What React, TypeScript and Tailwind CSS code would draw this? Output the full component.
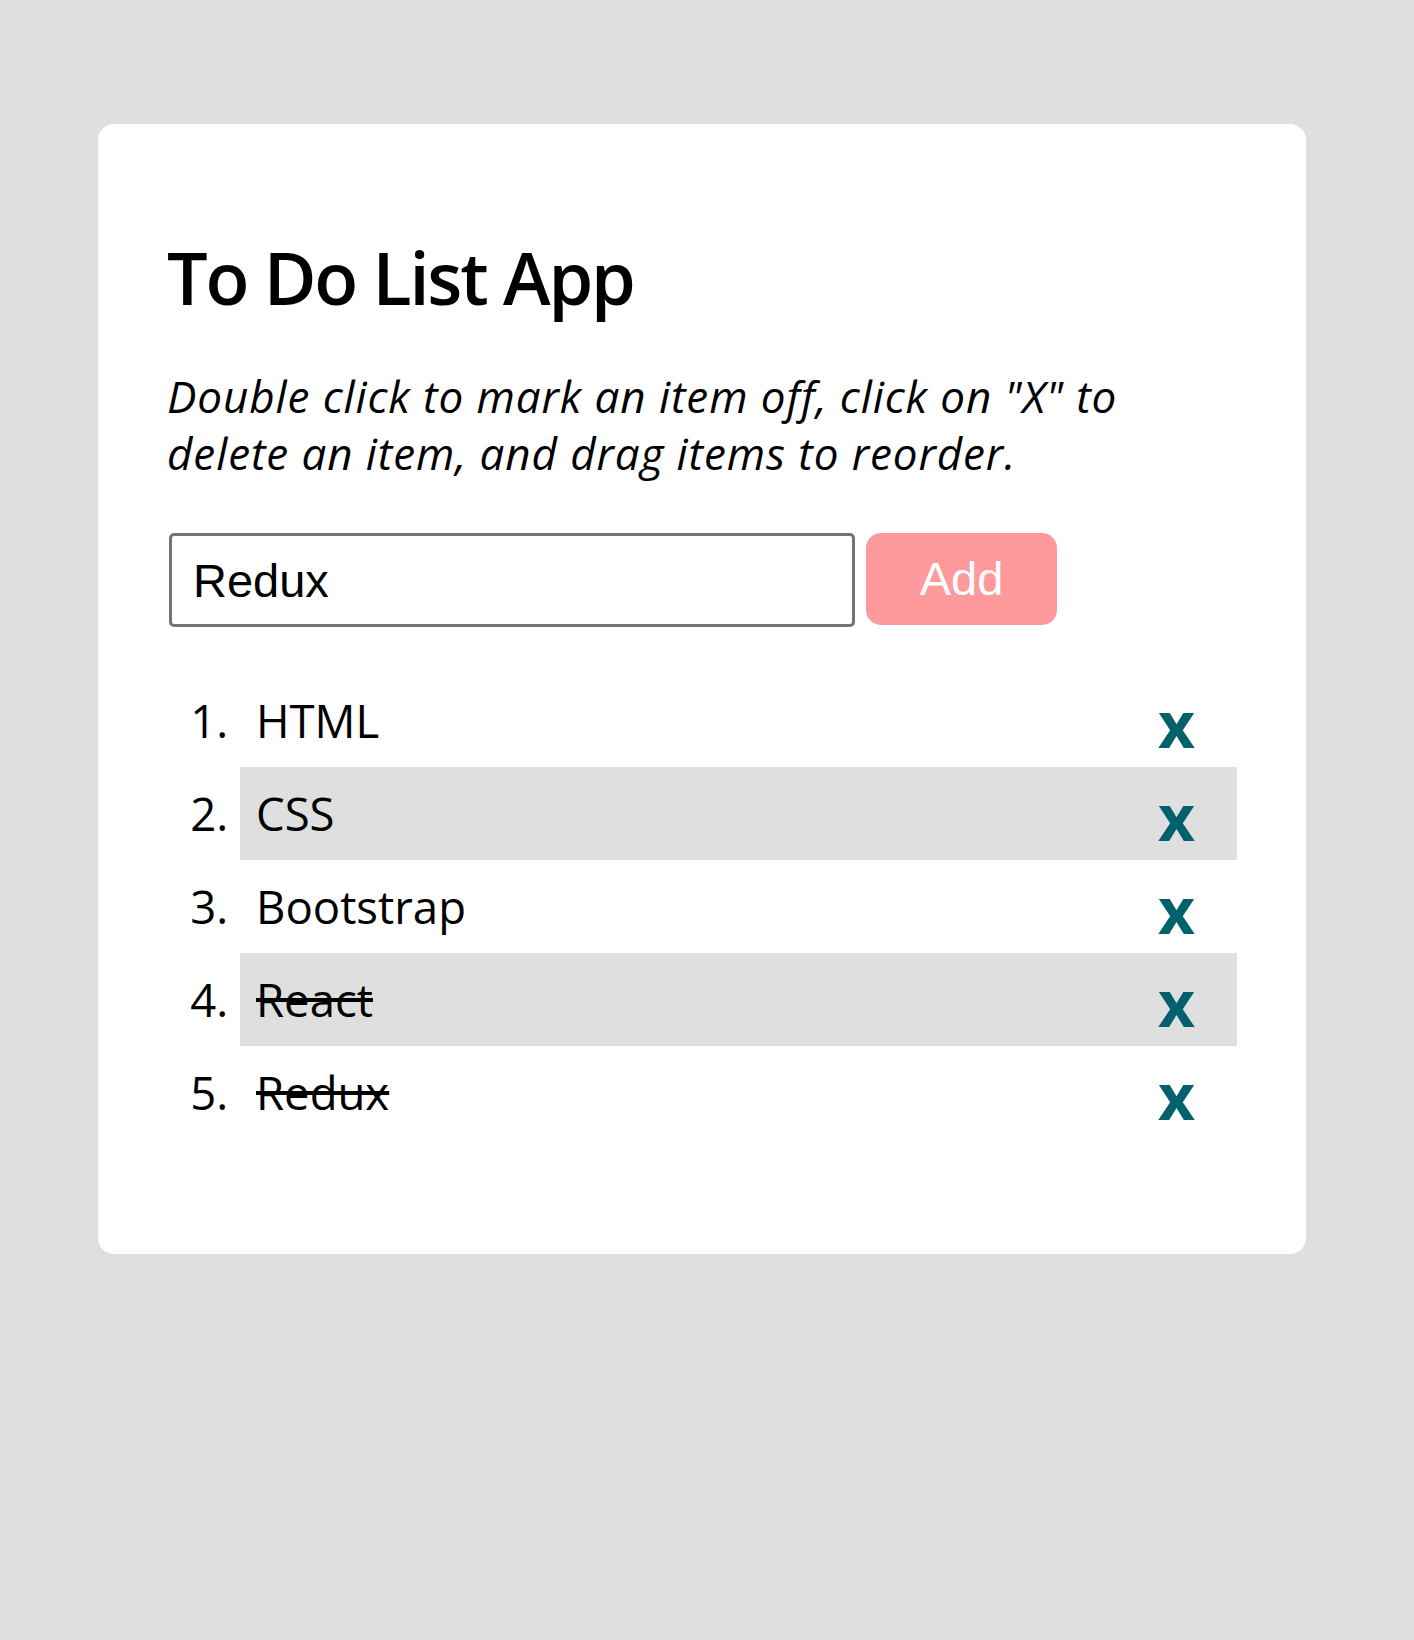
import { useState } from 'react';

type Todo = { id: number; text: string; done: boolean };

const initialTodos: Todo[] = [
  { id: 1, text: 'HTML', done: false },
  { id: 2, text: 'CSS', done: false },
  { id: 3, text: 'Bootstrap', done: false },
  { id: 4, text: 'React', done: true },
  { id: 5, text: 'Redux', done: true },
];

export default function App() {
  const [todos, setTodos] = useState<Todo[]>(initialTodos);
  const [value, setValue] = useState('Redux');

  const toggle = (id: number) =>
    setTodos((list) => list.map((t) => (t.id === id ? { ...t, done: !t.done } : t)));

  const remove = (id: number) => setTodos((list) => list.filter((t) => t.id !== id));

  const add = () => {
    if (!value.trim()) return;
    setTodos((list) => [...list, { id: Date.now(), text: value.trim(), done: false }]);
  };

  return (
    <div className="min-h-[1640px] bg-[#dfdfdf] pt-[124px] font-['Open_Sans',sans-serif] text-black">
      <div className="ml-[98px] w-[1208px] h-[1130px] rounded-[16px] bg-white px-[69px] pt-[104px]">
        {/* Header */}
        <h1 className="text-[72px] font-semibold leading-[98px] tracking-[-2.2px]">To Do List App</h1>
        <p className="mt-[42px] text-[44px] italic leading-[56.5px] tracking-[0.9px]">
          Double click to mark an item off, click on "X" to delete an item, and drag items to reorder.
        </p>

        {/* Input row */}
        <div className="mt-[52px] ml-[2px] flex items-start">
          <input
            value={value}
            onChange={(e) => setValue(e.target.value)}
            className="h-[94px] w-[686px] rounded-[5px] border-[3px] border-[#737373] bg-white px-[21px] font-['Liberation_Sans',Arial,sans-serif] text-[47px] text-black outline-none"
          />
          <button
            onClick={add}
            className="ml-[11px] h-[92px] w-[191px] rounded-[15px] bg-[#fe9a9b] font-['Liberation_Sans',Arial,sans-serif] text-[47px] text-white"
          >
            Add
          </button>
        </div>

        {/* List */}
        <ol className="mt-[47px] list-decimal pl-[73px]">
          {todos.map((todo, index) => (
            <li
              key={todo.id}
              onDoubleClick={() => toggle(todo.id)}
              className={`py-[16px] pl-[16px] pr-[42px] text-[45.5px] leading-[61px] ${
                index % 2 === 1 ? 'bg-[#dfdfdf]' : ''
              }`}
            >
              <div className="flex h-[61px] items-start justify-between">
                <span className={todo.done ? 'line-through' : ''}>{todo.text}</span>
                <button
                  onClick={() => remove(todo.id)}
                  className="h-[61px] translate-y-[3px] text-[64px] font-bold leading-[61px] text-[#03606d]"
                >
                  x
                </button>
              </div>
            </li>
          ))}
        </ol>
      </div>
    </div>
  );
}
